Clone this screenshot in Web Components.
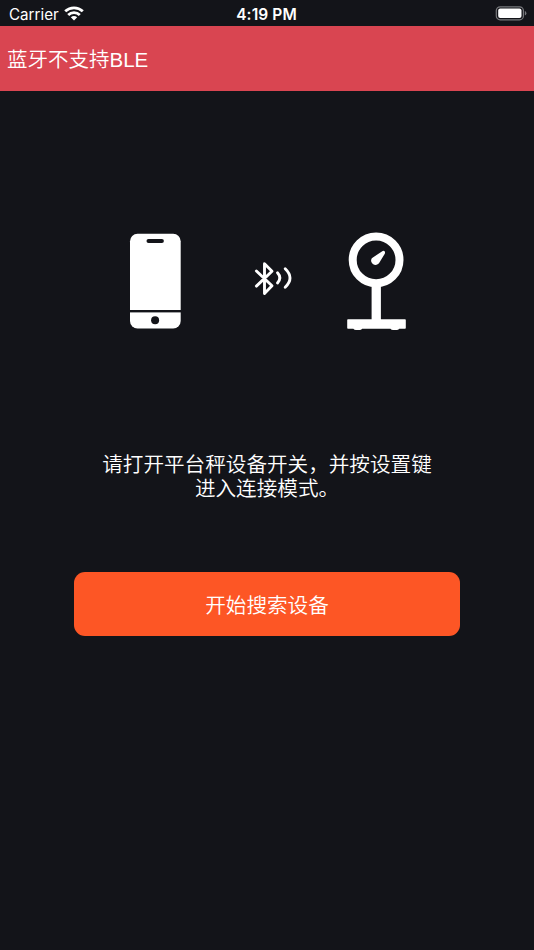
<!DOCTYPE html>
<html lang="zh-CN">
<head>
<meta charset="utf-8">
<title>蓝牙</title>
<style>
html,body{margin:0;height:100%;background:#131419}
body{font-family:Inter,"Noto Sans CJK SC",sans-serif;color:#fff;overflow:hidden}
</style>
</head>
<body>
<pairing-screen></pairing-screen>
<script>
function define(name, html) {
  const template = document.createElement('template');
  template.innerHTML = html;
  customElements.define(name, class extends HTMLElement {
    constructor() {
      super();
      this.attachShadow({mode: 'open'}).append(template.content.cloneNode(true));
    }
  });
}

define('status-bar', `
<style>
:host{display:grid;grid-template-columns:1fr auto 1fr;align-items:center;height:26px;box-sizing:border-box;padding:2px 7px 0 9px;font:400 15.2px/24px Inter,sans-serif}
.left{display:flex;align-items:center;gap:5px}
.left span{padding-top:1px}
.left svg{margin-top:-2px}
.time{font-weight:600;font-size:15.5px;letter-spacing:.1px;margin-right:3px;padding-top:1px}
.right{display:flex;justify-content:flex-end}
.right svg{margin-top:-2px}
svg{display:block}
</style>
<div class="left"><span>Carrier</span>
<svg width="20" height="15" viewBox="0 0 20 15" fill="none" stroke="#fff" stroke-width="2.8"><path d="M1.2 5.3C6.2.6 13.8.6 18.8 5.3M4.2 8.9c3.2-3.1 8.4-3.1 11.6 0"/><path d="M10 14.4 6.8 11.3q3.2-2.7 6.4 0z" fill="#fff" stroke="none"/></svg></div>
<span class="time">4:19 PM</span>
<div class="right"><svg width="32" height="15" viewBox="0 0 32 15"><rect x="1.3" y=".8" width="27.1" height="13" rx="3.8" fill="none" stroke="#77787c" stroke-width="1.2"/><rect x="3.2" y="2.6" width="23.3" height="9.4" rx="2" fill="#fff"/><path d="M29.8 5q1.6.5 1.6 2.3t-1.6 2.3z" fill="#77787c"/></svg></div>`);

define('alert-banner', `
<style>:host{display:flex;align-items:center;height:64.5px;padding:3px 7px 0;box-sizing:border-box;background:#d94551;font:350 20.5px/24px "Liberation Sans","Noto Sans CJK SC",sans-serif}</style>
<span><slot></slot></span>`);

define('phone-icon', `
<style>:host,svg{display:block}</style>
<svg width="52" height="98" viewBox="129 232 52 98"><rect x="130" y="233.7" width="50.7" height="94.8" rx="7.5" fill="#fff"/><g fill="#131419"><rect x="146.5" y="239" width="17.4" height="4" rx="2"/><rect x="129" y="310" width="52" height="2.4"/><circle cx="155.1" cy="320.2" r="4"/></g></svg>`);

define('bluetooth-icon', `
<style>:host,svg{display:block}</style>
<svg width="40" height="36" viewBox="254 261 40 36" fill="none" stroke="#fff" stroke-width="2.9" stroke-linecap="round" stroke-linejoin="round"><path d="M256.4 271 272 285.8l-7.5 7.6V263.8l7.5 7.4-15.6 14.9M277.5 272.8q4.6 5 0 10.2M285.2 268.8q9.6 9.2 0 18.4"/></svg>`);

define('scale-icon', `
<style>:host,svg{display:block}</style>
<svg width="60" height="98" viewBox="346 232 60 98" fill="#fff"><circle cx="376.1" cy="259.9" r="23.4" fill="none" stroke="#fff" stroke-width="8"/><path d="M371.6 284h9.3v36h-9.3zM348 319.3h57q.8 0 .8.8v7.8q0 .8-.8.8h-5.7q-1 1.3-2.7 1.3h-3.5q-1.7 0-2.7-1.3h-28.2q-1 1.3-2.7 1.3h-3.5q-1.7 0-2.7-1.3H348q-.8 0-.8-.8v-7.8q0-.8.8-.8zM371.8 258.2l10.1-6.8c2-1.4 3.9.2 2.9 2.3l-5.5 9.1a4.4 4.4 0 1 1-7.5-4.6z"/></svg>`);

define('device-link', `
<style>:host{display:flex;align-items:center;margin:141.5px 128px 0 129px;height:98px}
bluetooth-icon{margin:0 52px 4px 73px}</style>
<phone-icon></phone-icon><bluetooth-icon></bluetooth-icon><scale-icon></scale-icon>`);

define('pair-hint', `
<style>:host{display:block;width:334px;margin:120.5px auto 0;text-align:center;font:350 20.6px/24px "Noto Sans CJK SC",sans-serif}</style><slot></slot>`);

define('search-button', `
<style>:host{display:block;width:386.5px;margin:73.3px auto 0}
button{display:block;width:100%;height:64.3px;border:0;border-radius:11px;padding:0;background:#fd5625;color:#fff;font:350 20.6px/24px "Noto Sans CJK SC",sans-serif}</style>
<button><slot></slot></button>`);

define('pairing-screen', `
<style>:host{display:flex;flex-direction:column;width:534px;height:950px;background:#131419}</style>
<status-bar></status-bar>
<alert-banner>蓝牙不支持BLE</alert-banner>
<device-link></device-link>
<pair-hint>请打开平台秤设备开关，并按设置键进入连接模式。</pair-hint>
<search-button>开始搜索设备</search-button>`);
</script>
</body>
</html>
